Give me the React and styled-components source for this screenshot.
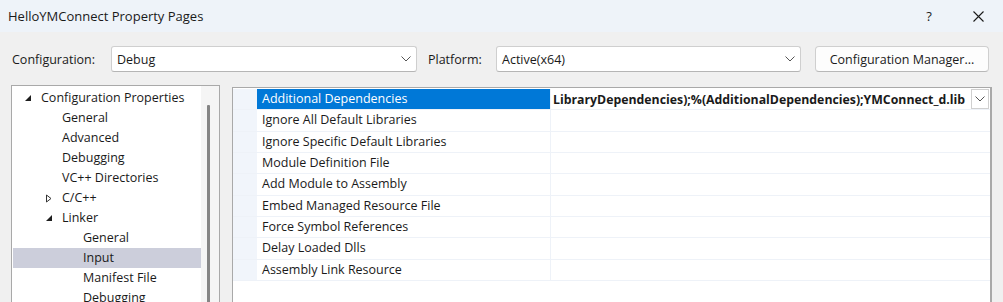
import React from 'react';
import styled, { createGlobalStyle } from 'styled-components';

const GlobalStyle = createGlobalStyle`
  html, body {
    margin: 0;
    padding: 0;
    background: #f0f0f0;
  }
  body {
    font-family: "Open Sans", "Noto Sans", sans-serif;
    font-size: 12.5px;
    color: #1a1a1a;
  }
`;

const treeItems = [
  { label: 'Configuration Properties', level: 0, toggle: 'open' },
  { label: 'General', level: 1 },
  { label: 'Advanced', level: 1 },
  { label: 'Debugging', level: 1 },
  { label: 'VC++ Directories', level: 1 },
  { label: 'C/C++', level: 1, toggle: 'closed' },
  { label: 'Linker', level: 1, toggle: 'open' },
  { label: 'General', level: 2 },
  { label: 'Input', level: 2, selected: true },
  { label: 'Manifest File', level: 2 },
  { label: 'Debugging', level: 2 },
];

const properties = [
  { name: 'Additional Dependencies', value: 'LibraryDependencies);%(AdditionalDependencies);YMConnect_d.lib', selected: true },
  { name: 'Ignore All Default Libraries' },
  { name: 'Ignore Specific Default Libraries' },
  { name: 'Module Definition File' },
  { name: 'Add Module to Assembly' },
  { name: 'Embed Managed Resource File' },
  { name: 'Force Symbol References' },
  { name: 'Delay Loaded Dlls' },
  { name: 'Assembly Link Resource' },
];

const Chevron = () => (
  <svg width="10" height="6" viewBox="0 0 10 6">
    <path d="M0.5 0.5 L5 5 L9.5 0.5" fill="none" stroke="#555" strokeWidth="1" />
  </svg>
);

const App = () => {
  return (
    <>
      <GlobalStyle />
      <Window>
        <TitleBar>
          <Title>HelloYMConnect Property Pages</Title>
          <HelpGlyph>?</HelpGlyph>
          <CloseBox>
            <svg width="11" height="11" viewBox="0 0 11 11">
              <path d="M0.5 0.5 L10.5 10.5 M10.5 0.5 L0.5 10.5" stroke="#1a1a1a" strokeWidth="1.1" />
            </svg>
          </CloseBox>
        </TitleBar>

        <ConfigBar>
          <FieldLabel $width={99}>Configuration:</FieldLabel>
          <Combo $width={306}>
            <span>Debug</span>
            <Chevron />
          </Combo>
          <FieldLabel $width={68} $left={11}>Platform:</FieldLabel>
          <Combo $width={305}>
            <span>Active(x64)</span>
            <Chevron />
          </Combo>
          <ManagerButton>Configuration Manager...</ManagerButton>
        </ConfigBar>

        <Body>
          <TreePanel>
            <TreeList>
              {treeItems.map((item, i) => (
                <TreeItem key={i} $level={item.level} $selected={item.selected}>
                  {item.toggle === 'open' && <OpenArrow />}
                  {item.toggle === 'closed' && <ClosedArrow />}
                  {item.label}
                </TreeItem>
              ))}
            </TreeList>
            <ScrollTrack>
              <ScrollThumb />
            </ScrollTrack>
          </TreePanel>

          <GridPanel>
            {properties.map((p, i) => (
              <PropRow key={i}>
                <Gutter />
                <NameCell $selected={p.selected}>{p.name}</NameCell>
                <ValueCell>
                  {p.value && <ValueText>{p.value}</ValueText>}
                  {p.selected && (
                    <DropButton>
                      <Chevron />
                    </DropButton>
                  )}
                </ValueCell>
              </PropRow>
            ))}
          </GridPanel>
        </Body>
      </Window>
    </>
  );
};

export default App;

const Window = styled.div`
  width: 1003px;
  height: 302px;
  overflow: hidden;
  background: #f0f0f0;
`;

const TitleBar = styled.div`
  height: 32px;
  display: flex;
  align-items: center;
  padding-left: 8px;
  background: #eef3f9;
`;

const Title = styled.div`
  font-size: 13px;
  flex: 1;
  margin-top: -1px;
`;

const HelpGlyph = styled.div`
  font-size: 13px;
  width: 20px;
  text-align: center;
  margin-right: 34px;
`;

const CloseBox = styled.div`
  width: 11px;
  height: 11px;
  display: flex;
  margin-right: 19px;
`;

const ConfigBar = styled.div`
  display: flex;
  align-items: center;
  margin-top: 14px;
  padding-left: 12px;
  height: 26px;
`;

const FieldLabel = styled.div`
  width: ${(p) => p.$width}px;
  margin-left: ${(p) => p.$left || 0}px;
  flex-shrink: 0;
`;

const Combo = styled.div`
  box-sizing: border-box;
  width: ${(p) => p.$width}px;
  height: 26px;
  display: flex;
  align-items: center;
  justify-content: space-between;
  padding: 0 5px 0 5px;
  background: #fff;
  border: 1px solid #cfcfcf;
  border-bottom-color: #b5b5b5;
  border-radius: 3px;
`;

const ManagerButton = styled.button`
  box-sizing: border-box;
  width: 174px;
  height: 26px;
  margin-left: 14px;
  background: #fdfdfd;
  border: 1px solid #cfcfcf;
  border-bottom-color: #b8b8b8;
  border-radius: 4px;
  font: inherit;
  color: #1a1a1a;
  padding: 0;
`;

const Body = styled.div`
  display: flex;
  margin-top: 13px;
  padding-left: 11px;
  gap: 12px;
`;

const TreePanel = styled.div`
  box-sizing: border-box;
  width: 209px;
  height: 260px;
  display: flex;
  border: 1px solid #a9a9a9;
  background: #fff;
`;

const TreeList = styled.div`
  flex: 1;
  padding-top: 2px;
`;

const TreeItem = styled.div`
  position: relative;
  height: 20px;
  line-height: 20px;
  margin-left: 1px;
  padding-left: ${(p) => 28 + p.$level * 21}px;
  background: ${(p) => (p.$selected ? '#cccedb' : 'transparent')};
  white-space: nowrap;

  & > svg {
    position: absolute;
    left: ${(p) => 11 + p.$level * 21}px;
    top: 6px;
  }
`;

const OpenArrow = () => (
  <svg width="8" height="8" viewBox="0 0 8 8">
    <path d="M7 1 L7 7 L1 7 Z" fill="#1e1e1e" />
  </svg>
);

const ClosedArrow = () => (
  <svg width="8" height="9" viewBox="0 0 8 9">
    <path d="M1.5 1 L6 4.5 L1.5 8 Z" fill="none" stroke="#333" strokeWidth="1" />
  </svg>
);

const ScrollTrack = styled.div`
  width: 18px;
  background: #f5f5f5;
  position: relative;
`;

const ScrollThumb = styled.div`
  margin: 19px 0 0 6px;
  width: 3px;
  height: 230px;
  background: #858585;
  border-radius: 1px;
`;

const GridPanel = styled.div`
  box-sizing: border-box;
  width: 760px;
  height: 260px;
  border-top: 1px solid #a9a9a9;
  border-left: 1px solid #a9a9a9;
  border-right: 2px solid #a9a9a9;
  background: #fff;
  margin-top: 2px;
  padding-top: 1px;
`;

const PropRow = styled.div`
  display: grid;
  grid-template-columns: 24px 294px 1fr;
  height: 21.33px;
  box-sizing: border-box;
  border-bottom: 1px solid #eef2f8;
`;

const Gutter = styled.div`
  background: #f1f5fb;
`;

const NameCell = styled.div`
  padding-left: 5px;
  line-height: 20px;
  white-space: nowrap;
  border-right: 1px solid #eef2f8;
  background: ${(p) => (p.$selected ? '#0078d7' : 'transparent')};
  color: ${(p) => (p.$selected ? '#fff' : '#1a1a1a')};
`;

const ValueCell = styled.div`
  display: flex;
  align-items: center;
  padding-left: 2px;
  overflow: hidden;
`;

const ValueText = styled.div`
  flex: 1;
  font-size: 12.3px;
  font-weight: 700;
  white-space: nowrap;
  overflow: hidden;
`;

const DropButton = styled.div`
  box-sizing: border-box;
  width: 18px;
  height: 20px;
  display: flex;
  align-items: center;
  justify-content: center;
  background: #fff;
  border: 1px solid #d0d0d0;
  margin-right: 1px;
  flex-shrink: 0;
`;
